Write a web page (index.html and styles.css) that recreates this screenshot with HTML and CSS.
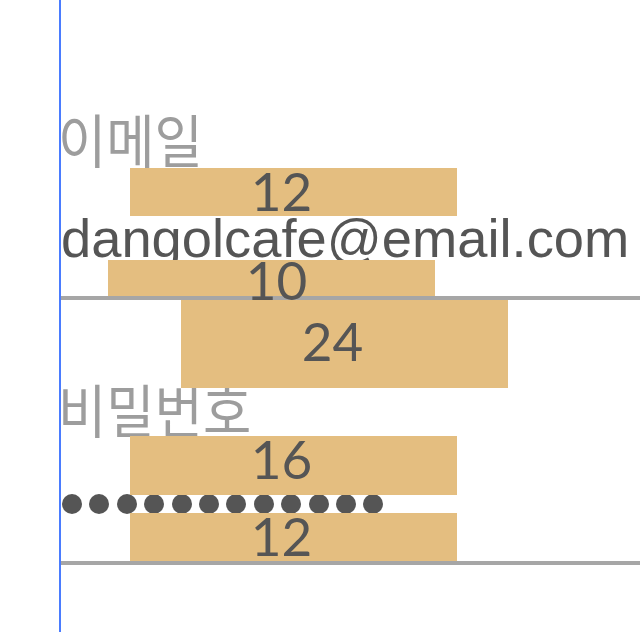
FILE: index.html
```html
<!DOCTYPE html>
<html lang="ko">
<head>
    <meta charset="UTF-8">
    <meta name="viewport" content="width=device-width, initial-scale=1.0">
    <title>로그인 간격</title>
    <link rel="stylesheet" href="styles.css">
</head>
<body>
    <div id="form">
        <div class="field field-email">
            <div class="label">이메일</div>
            <div class="value">dangolcafe@email.com</div>
        </div>

        <div class="field field-pw">
            <div class="label">비밀번호</div>
            <div class="dots">
                <span></span><span></span><span></span><span></span>
                <span></span><span></span><span></span><span></span>
                <span></span><span></span><span></span><span></span>
            </div>
        </div>

        <!-- 간격 표시 -->
        <div class="gap gap-a"><span>12</span></div>
        <div class="gap gap-b"><span>10</span></div>
        <div class="gap gap-c"><span>24</span></div>
        <div class="gap gap-d"><span>16</span></div>
        <div class="gap gap-e"><span>12</span></div>
    </div>
</body>
</html>
```

FILE: styles.css
```css
* {
    margin: 0;
    padding: 0;
    box-sizing: border-box;
}

body {
    background-color: #fff;
    overflow: hidden;
}

#form {
    margin-left: 59px;
    height: 632px;
    border-left: 2px solid #4a7cff;
    position: relative;
}

.field {
    border-bottom: 4px solid #a6a6a6;
}

.field-email {
    padding-top: 108px;
}

.field-pw {
    padding-top: 78px;
}

.label {
    font: 50px/50px "Noto Sans CJK KR", sans-serif;
    color: #9d9d9d;
    margin-left: -3px;
    transform: scale(1.05, 1.16);
    transform-origin: top left;
}

.value {
    margin-top: 54px;
    margin-bottom: 30px;
    font: 54.3px/54px "Liberation Sans", Arial, sans-serif;
    color: #555;
}

.dots {
    display: flex;
    gap: 7.4px;
    margin-top: 66px;
    margin-bottom: 47px;
    padding-left: 1px;
}

.dots span {
    width: 20px;
    height: 20px;
    border-radius: 50%;
    background-color: #555;
}

.gap {
    position: absolute;
    width: 327px;
    background-color: #e4be80;
    font: 53px/53px Lato, sans-serif;
    color: #555;
    text-align: center;
}

.gap span {
    display: block;
    margin-top: -4px;
    padding-right: 24px;
}

.gap-a {
    left: 69px;
    top: 168px;
    height: 48px;
}

.gap-b {
    left: 47px;
    top: 260px;
    height: 36px;
}

.gap-b span {
    margin-top: -7px;
    padding-right: 0;
    padding-left: 10px;
}

.gap-c {
    left: 120px;
    top: 300px;
    height: 88px;
}

.gap-c span {
    margin-top: 14px;
}

.gap-d {
    left: 69px;
    top: 436px;
    height: 59px;
}

.gap-e {
    left: 69px;
    top: 513px;
    height: 48px;
}
```
